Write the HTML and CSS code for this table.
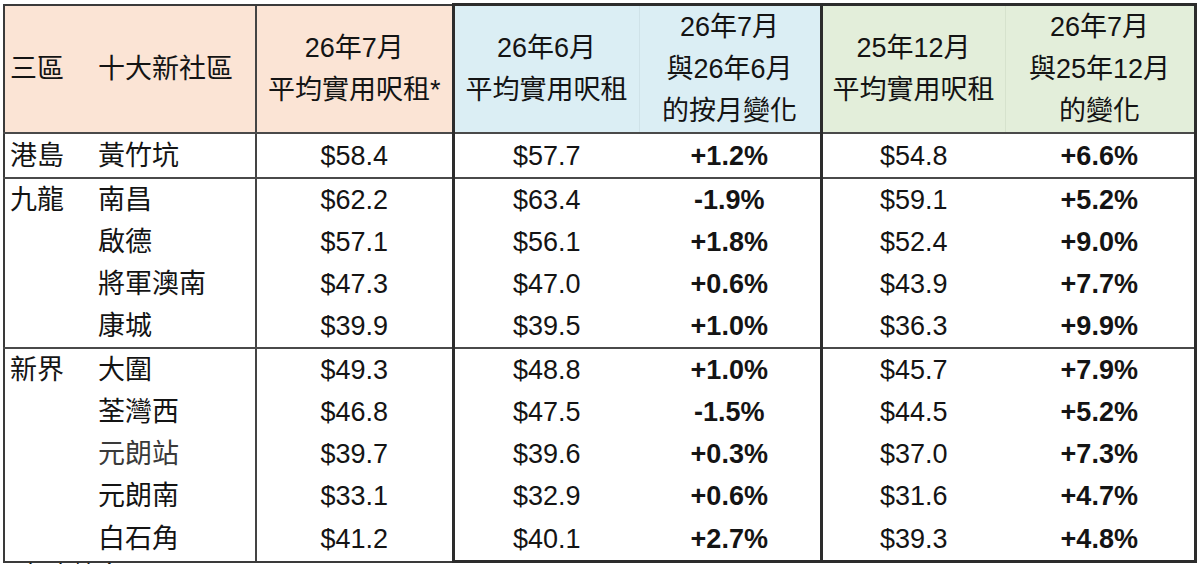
FILE: index.html
```html
<!DOCTYPE html>
<html lang="zh-Hant">
<head>
<meta charset="utf-8">
<title>十大新社區 平均實用呎租</title>
<link rel="stylesheet" href="styles.css">
</head>
<body>
<table class="rent">
  <colgroup>
    <col class="c1"><col class="c2"><col class="c3"><col class="c4"><col class="c5"><col class="c6"><col class="c7">
  </colgroup>
  <thead>
    <tr>
      <th class="peach left">三區</th>
      <th class="peach left">十大新社區</th>
      <th class="peach mid">26年7月<br>平均實用呎租*</th>
      <th class="blue gl">26年6月<br>平均實用呎租</th>
      <th class="blue">26年7月<br>與26年6月<br>的按月變化</th>
      <th class="green gl">25年12月<br>平均實用呎租</th>
      <th class="green gr">26年7月<br>與25年12月<br>的變化</th>
    </tr>
  </thead>
  <tbody class="g1">
    <tr class="r-first r-last"><td>港島</td><td>黃竹坑</td><td class="mid">$58.4</td><td class="gl">$57.7</td><td class="b">+1.2%</td><td class="gl">$54.8</td><td class="b gr">+6.6%</td></tr>
  </tbody>
  <tbody class="g2">
    <tr class="r-first"><td>九龍</td><td>南昌</td><td class="mid">$62.2</td><td class="gl">$63.4</td><td class="b">-1.9%</td><td class="gl">$59.1</td><td class="b gr">+5.2%</td></tr>
    <tr><td></td><td>啟德</td><td class="mid">$57.1</td><td class="gl">$56.1</td><td class="b">+1.8%</td><td class="gl">$52.4</td><td class="b gr">+9.0%</td></tr>
    <tr><td></td><td>將軍澳南</td><td class="mid">$47.3</td><td class="gl">$47.0</td><td class="b">+0.6%</td><td class="gl">$43.9</td><td class="b gr">+7.7%</td></tr>
    <tr class="r-last"><td></td><td>康城</td><td class="mid">$39.9</td><td class="gl">$39.5</td><td class="b">+1.0%</td><td class="gl">$36.3</td><td class="b gr">+9.9%</td></tr>
  </tbody>
  <tbody class="g3">
    <tr class="r-first"><td>新界</td><td>大圍</td><td class="mid">$49.3</td><td class="gl">$48.8</td><td class="b">+1.0%</td><td class="gl">$45.7</td><td class="b gr">+7.9%</td></tr>
    <tr><td></td><td>荃灣西</td><td class="mid">$46.8</td><td class="gl">$47.5</td><td class="b">-1.5%</td><td class="gl">$44.5</td><td class="b gr">+5.2%</td></tr>
    <tr><td></td><td class="soft">元朗站</td><td class="mid">$39.7</td><td class="gl">$39.6</td><td class="b">+0.3%</td><td class="gl">$37.0</td><td class="b gr">+7.3%</td></tr>
    <tr><td></td><td>元朗南</td><td class="mid">$33.1</td><td class="gl">$32.9</td><td class="b">+0.6%</td><td class="gl">$31.6</td><td class="b gr">+4.7%</td></tr>
    <tr class="r-last"><td></td><td>白石角</td><td class="mid">$41.2</td><td class="gl">$40.1</td><td class="b">+2.7%</td><td class="gl">$39.3</td><td class="b gr">+4.8%</td></tr>
  </tbody>
</table>
<p class="note">*臨時數字</p>
</body>
</html>
```

FILE: styles.css
```css
html, body {
  margin: 0;
  padding: 0;
  background: #ffffff;
}

body {
  padding: 3px 0 0 3px;
  font-family: "Liberation Sans", "Noto Sans CJK TC", sans-serif;
  color: #141414;
}

.rent {
  border-collapse: collapse;
  table-layout: fixed;
  width: 1191px;
  font-size: 27px;
  line-height: 42px;
}

.c1 { width: 87px; }
.c2 { width: 165px; }
.c3 { width: 197px; }
.c4 { width: 186px; }
.c5 { width: 182px; }
.c6 { width: 184px; }
.c7 { width: 190px; }

.rent th,
.rent td {
  padding: 0;
  text-align: center;
  vertical-align: middle;
  white-space: nowrap;
}

.rent th {
  font-weight: normal;
  height: 125px;
  border-top: 2px solid #3a3a3a;
  border-bottom: 2px solid #4a4a4a;
}

.rent th.left,
.rent td:nth-child(1),
.rent td:nth-child(2) {
  text-align: left;
}

.rent th:nth-child(1),
.rent td:nth-child(1) {
  padding-left: 5px;
  border-left: 2px solid #3a3a3a;
}

.rent th:nth-child(2),
.rent td:nth-child(2) {
  padding-left: 7px;
}

.peach { background: #fbe4d5; }
.blue { background: #dbeef4; }
.green { background: #e3eeda; }

.rent th.blue.gl { border-right: 1px solid #cfe2e8; }
.rent th.green.gl { border-right: 1px solid #d6e2cd; }

.rent th.blue,
.rent th.green {
  border-top: 3px solid #2c2c2c;
}

.mid { border-left: 2px solid #444; }
.gl { border-left: 3px solid #2c2c2c; }
.gr { border-right: 3px solid #2c2c2c; }

.rent td.b { font-weight: bold; }
.rent td.soft { color: #3a3a3a; }

.rent td {
  height: 42px;
}

.rent tbody tr.r-last td {
  border-bottom: 2px solid #4a4a4a;
}

.rent tbody.g1 tr td { height: 43px; }
.rent tbody.g2 tr.r-last td { height: 41px; }
.rent tbody.g3 tr td { height: 41px; }
.rent tbody.g3 tr.r-last td {
  height: 43px;
  border-bottom: 2px solid #3a3a3a;
}
.rent tbody.g3 tr.r-last td:nth-child(n+4) {
  border-bottom: 3px solid #2c2c2c;
}

.note {
  margin: 0;
  font-size: 27px;
  line-height: 24px;
  font-family: "Noto Sans CJK TC", sans-serif;
}
```
